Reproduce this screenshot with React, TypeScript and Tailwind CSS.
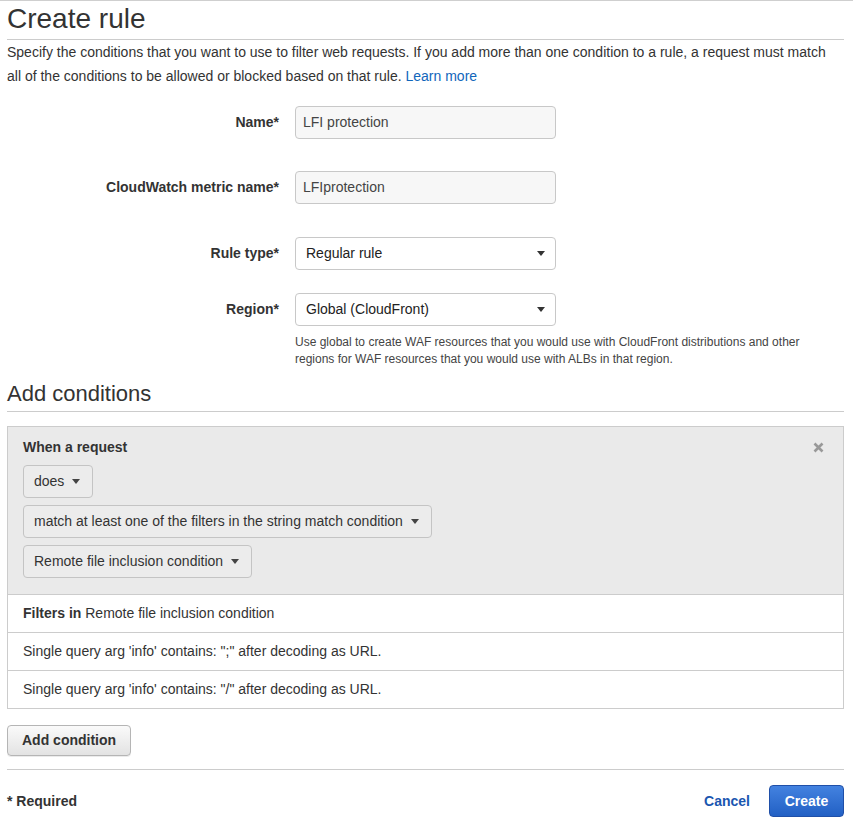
import React from "react";

const Caret = () => (
  <svg width="8" height="5" viewBox="0 0 8 5" className="ml-[8px] inline-block">
    <path d="M0 0 L8 0 L4 5 Z" fill="#444" />
  </svg>
);

interface FieldProps {
  label: string;
  children: React.ReactNode;
  className?: string;
}

const Field: React.FC<FieldProps> = ({ label, children, className }) => (
  <div className={"flex items-start " + (className ?? "")}>
    <label className="w-[272px] shrink-0 text-right font-bold text-[14px] leading-[32px] text-[#333]">
      {label}
    </label>
    <div className="ml-[16px]">{children}</div>
  </div>
);

const TextBox = ({ value }: { value: string }) => (
  <div className="w-[261px] h-[33px] rounded-[4px] border border-[#c8c8c8] bg-[#f7f7f7] px-[7px] text-[14px] leading-[31px] text-[#444]">
    {value}
  </div>
);

const SelectBox = ({ value }: { value: string }) => (
  <div className="w-[261px] h-[33px] rounded-[4px] border border-[#c8c8c8] bg-white pl-[10px] pr-[10px] flex items-center justify-between text-[14px] text-[#222]">
    <span>{value}</span>
    <svg width="8" height="5" viewBox="0 0 8 5">
      <path d="M0 0 L8 0 L4 5 Z" fill="#333" />
    </svg>
  </div>
);

const DropButton = ({ label }: { label: string }) => (
  <div className="inline-flex items-center h-[33px] rounded-[4px] border border-[#c4c4c4] bg-[#ececec] pl-[10px] pr-[12px] text-[14px] text-[#333]">
    {label}
    <Caret />
  </div>
);

export default function App() {
  return (
    <div
      className="min-h-[825px] w-[853px] bg-white border-t border-[#cfcfcf] pl-[7px] pr-[9px] text-[#333]"
      style={{ fontFamily: '"Liberation Sans", Arial, Helvetica, sans-serif' }}
    >
      <h1 className="text-[28px] leading-[32px] pt-[2px] text-[#333] font-normal">Create rule</h1>
      <div className="mt-[4px] border-t border-[#cccccc]" />
      <p className="text-[14px] leading-[24px] text-[#333]">
        Specify the conditions that you want to use to filter web requests. If you add more than one condition to a rule, a request must match
        <br />
        all of the conditions to be allowed or blocked based on that rule.{" "}
        <a className="text-[#1166bb]">Learn more</a>
      </p>

      <div className="mt-[18px]">
        <Field label="Name*">
          <TextBox value="LFI protection" />
        </Field>
        <Field label="CloudWatch metric name*" className="mt-[32px]">
          <TextBox value="LFIprotection" />
        </Field>
        <Field label="Rule type*" className="mt-[33px]">
          <SelectBox value="Regular rule" />
        </Field>
        <Field label="Region*" className="mt-[23px]">
          <SelectBox value="Global (CloudFront)" />
          <p className="mt-[8px] w-[530px] text-[12px] leading-[17px] text-[#444]">
            Use global to create WAF resources that you would use with CloudFront distributions and other regions for WAF resources that you would use with ALBs in that region.
          </p>
        </Field>
      </div>

      <h2 className="mt-[12px] text-[22px] leading-[28px] font-normal text-[#333]">Add conditions</h2>
      <div className="mt-[3px] border-t border-[#cccccc]" />

      <div className="mt-[14px] border border-[#cccccc]">
        <div className="bg-[#eaeaea] px-[15px] pt-[10px] pb-[16px]">
          <div className="flex items-center justify-between">
            <span className="font-bold text-[14px] leading-[20px] text-[#333]">When a request</span>
            <svg width="11" height="11" viewBox="0 0 11 11" className="mr-[4px]">
              <path d="M1.5 1.5 L9.5 9.5 M9.5 1.5 L1.5 9.5" stroke="#999" strokeWidth="2.6" strokeLinecap="butt" />
            </svg>
          </div>
          <div className="mt-[8px] flex flex-col items-start gap-[7px]">
            <DropButton label="does" />
            <DropButton label="match at least one of the filters in the string match condition" />
            <DropButton label="Remote file inclusion condition" />
          </div>
        </div>
        <div className="border-t border-[#cccccc] px-[15px] h-[38px] flex items-center text-[14px] text-[#333]">
          <span className="font-bold">Filters in</span>&nbsp;Remote file inclusion condition
        </div>
        <div className="border-t border-[#cccccc] px-[15px] h-[38px] flex items-center text-[14px] text-[#333]">
          Single query arg 'info' contains: ";" after decoding as URL.
        </div>
        <div className="border-t border-[#cccccc] px-[15px] h-[38px] flex items-center text-[14px] text-[#333]">
          Single query arg 'info' contains: "/" after decoding as URL.
        </div>
      </div>

      <button className="mt-[16px] h-[31px] px-[14px] rounded-[4px] border border-[#b5b5b5] bg-gradient-to-b from-[#fafafa] to-[#e3e3e3] font-bold text-[14px] text-[#333] shadow-[0_1px_0_rgba(0,0,0,0.08)]">
        Add condition
      </button>

      <div className="mt-[13px] border-t border-[#cccccc]" />

      <div className="mt-[15px] flex items-center justify-between">
        <span className="font-bold text-[14px] text-[#333]">* Required</span>
        <div className="flex items-center">
          <span className="font-bold text-[14px] text-[#1a56b0] mr-[19px]">Cancel</span>
          <button className="h-[32px] w-[75px] rounded-[4px] border border-[#1f4fa8] bg-gradient-to-b from-[#4382e0] to-[#2260c4] font-bold text-[14px] text-white">
            Create
          </button>
        </div>
      </div>
    </div>
  );
}
